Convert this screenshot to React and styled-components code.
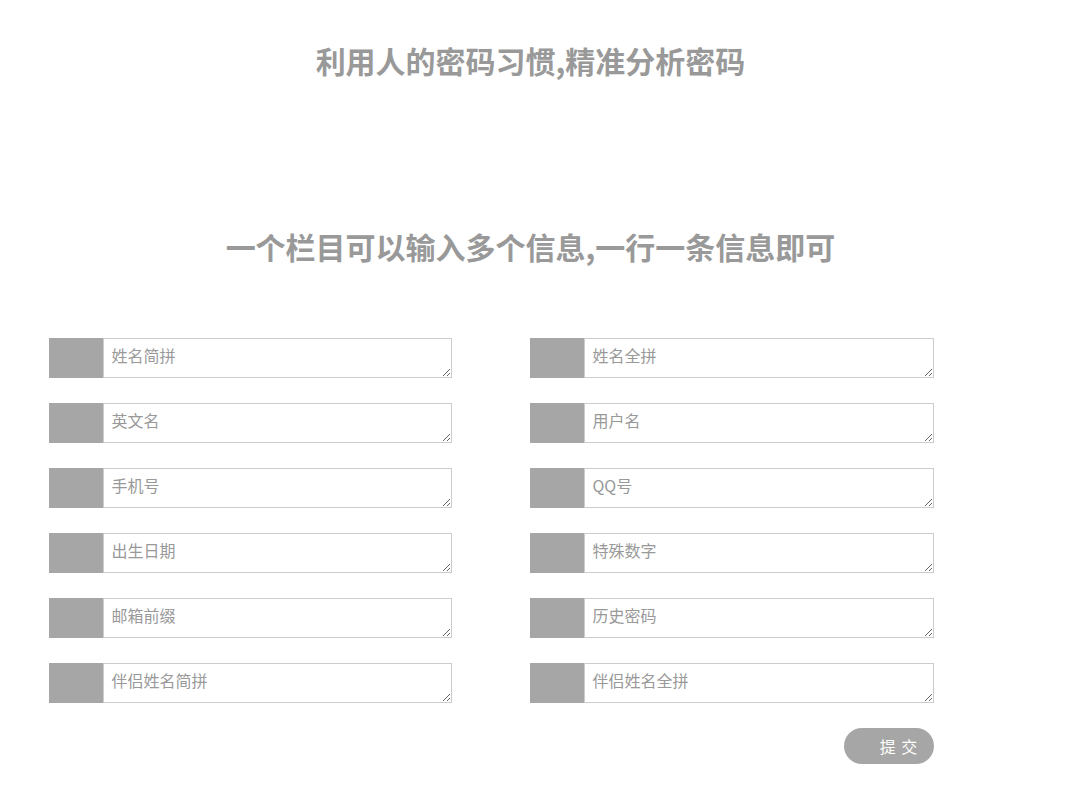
import React from "react";
import styled, { createGlobalStyle } from "styled-components";

const Global = createGlobalStyle`
  html, body { margin: 0; padding: 0; background: #fff; }
  body { font-family: "Noto Sans CJK SC", "Noto Sans", sans-serif; }
  * { box-sizing: border-box; }
`;

const Page = styled.div`
  width: 1072px;
  padding: 43px 0 30px 49px;
`;

const Title = styled.h1`
  margin: 0;
  width: 963px;
  text-align: center;
  font-size: 30px;
  line-height: 34px;
  font-weight: 700;
  color: #999;
  margin-top: ${(p) => p.$top || 0}px;
`;

const Grid = styled.div`
  margin-top: 75px;
  display: grid;
  grid-template-columns: 403px 404px;
  column-gap: 78px;
  row-gap: 25px;
  width: 885px;
`;

const Field = styled.div`
  display: flex;
  height: 40px;
`;

const Tag = styled.div`
  width: 53.5px;
  height: 40px;
  background: #a6a6a6;
  flex: none;
`;

const Area = styled.textarea`
  flex: 1;
  height: 40px;
  border: 1px solid #cccccc;
  margin: 0;
  padding: 4px 8px;
  font-family: "Noto Sans CJK SC", sans-serif;
  font-size: 16px;
  line-height: 24px;
  color: #555;
  resize: vertical;
  outline: none;
  &::placeholder { color: #999; }
`;

const Actions = styled.div`
  width: 885px;
  display: flex;
  justify-content: flex-end;
  margin-top: 25px;
`;

const Submit = styled.button`
  width: 90px;
  height: 36px;
  border: none;
  border-radius: 18px;
  background: #a6a6a6;
  color: #fff;
  font-family: "Noto Sans CJK SC", sans-serif;
  font-size: 16px;
  padding: 0 0 0 20px;
  letter-spacing: 1px;
  cursor: pointer;
`;

const fields = [
  "姓名简拼", "姓名全拼",
  "英文名", "用户名",
  "手机号", "QQ号",
  "出生日期", "特殊数字",
  "邮箱前缀", "历史密码",
  "伴侣姓名简拼", "伴侣姓名全拼",
];

export default function App() {
  return (
    <Page>
      <Global />
      <Title>利用人的密码习惯,精准分析密码</Title>
      <Title $top={152}>一个栏目可以输入多个信息,一行一条信息即可</Title>
      <Grid>
        {fields.map((f) => (
          <Field key={f}>
            <Tag />
            <Area placeholder={f} />
          </Field>
        ))}
      </Grid>
      <Actions>
        <Submit>提 交</Submit>
      </Actions>
    </Page>
  );
}
